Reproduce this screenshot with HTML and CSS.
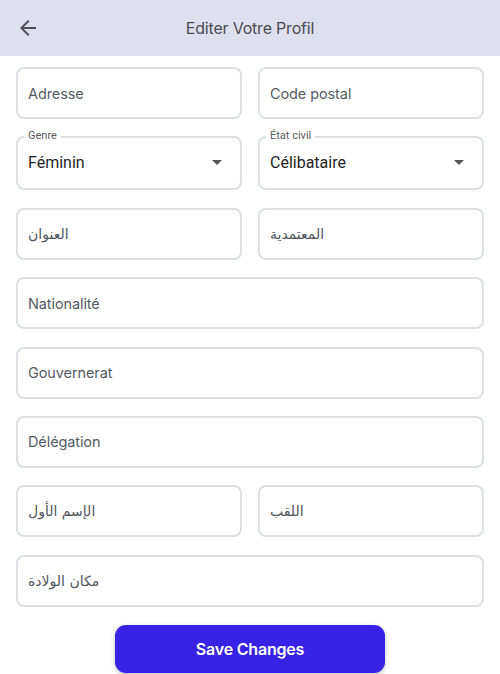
FILE: index.html
```html
<!DOCTYPE html>
<html lang="fr">
<head>
<meta charset="utf-8">
<title>Editer Votre Profil</title>
<link rel="stylesheet" href="styles.css">
</head>
<body>
<header class="topbar">
  <button class="back" aria-label="Retour">
    <svg width="24" height="24" viewBox="0 0 24 24"><path d="M20 11H7.83l5.59-5.59L12 4l-8 8 8 8 1.41-1.41L7.83 13H20v-2z" fill="#4f4f55"/></svg>
  </button>
  <h1 class="title">Editer Votre Profil</h1>
  <span></span>
</header>
<main class="form">
  <div class="row two">
    <div class="field"><span class="ph">Adresse</span></div>
    <div class="field"><span class="ph">Code postal</span></div>
  </div>
  <div class="row two">
    <div class="select"><span class="label">Genre</span><span class="value">Féminin</span><span class="caret"></span></div>
    <div class="select"><span class="label">État civil</span><span class="value">Célibataire</span><span class="caret"></span></div>
  </div>
  <div class="row two">
    <div class="field"><span class="ph ar">العنوان</span></div>
    <div class="field"><span class="ph ar">المعتمدية</span></div>
  </div>
  <div class="row"><div class="field"><span class="ph">Nationalité</span></div></div>
  <div class="row"><div class="field"><span class="ph">Gouvernerat</span></div></div>
  <div class="row"><div class="field"><span class="ph">Délégation</span></div></div>
  <div class="row two">
    <div class="field"><span class="ph ar">الإسم الأول</span></div>
    <div class="field"><span class="ph ar">اللقب</span></div>
  </div>
  <div class="row"><div class="field"><span class="ph ar">مكان الولادة</span></div></div>
  <div class="actions"><button class="save">Save Changes</button></div>
</main>
</body>
</html>
```
FILE: styles.css
```css
* { box-sizing: border-box; }
html, body { margin: 0; padding: 0; background: #ffffff; }
body { font-family: Inter, "Noto Sans", sans-serif; width: 500px; height: 674px; overflow: hidden; }

.topbar {
  height: 56px;
  background: #dfe0ee;
  display: grid;
  grid-template-columns: 56px 1fr 56px;
  align-items: center;
}
.back {
  border: 0; background: none; padding: 0 0 0 16px; margin: 0;
  display: flex; align-items: center; height: 56px; cursor: pointer;
}
.title {
  margin: 0; text-align: center;
  font-size: 16px; font-weight: 400; color: #4a4a50; letter-spacing: -0.2px;
}

.form {
  padding: 11px 16px 0;
  display: flex; flex-direction: column; gap: 17.4px;
}
.row { display: grid; grid-template-columns: 1fr; }
.row.two { grid-template-columns: 1fr 1fr; column-gap: 16px; }

.field {
  height: 52px;
  border: 2px solid #dcdfe3;
  border-radius: 8px;
  display: flex; align-items: center;
  padding: 0 10px;
}
.ph { font-size: 14.5px; color: #545b63; letter-spacing: -0.1px; }
.ph.ar { font-family: "DejaVu Sans", sans-serif; font-size: 14px; color: #4e545b; }

.select {
  position: relative;
  height: 54px;
  border: 2px solid #dcdfe3;
  border-radius: 8px;
  display: flex; align-items: center; justify-content: space-between;
  padding: 0 18px 2px 10px;
}
.label {
  position: absolute; top: -9px; left: 6px;
  background: #fff; padding: 0 4px;
  font-family: Roboto, sans-serif; font-size: 11px; color: #5a5a5a;
  line-height: 14px;
}
.value { font-family: Roboto, sans-serif; font-size: 16px; color: #1f1f1f; }
.caret {
  width: 0; height: 0;
  border-left: 5px solid transparent;
  border-right: 5px solid transparent;
  border-top: 5px solid #555;
}

.actions { display: flex; justify-content: center; padding-top: 0.6px; }
.save {
  width: 270px; height: 48px;
  border: 0; border-radius: 11px;
  background: #3822e6; color: #fff;
  font-family: Inter, sans-serif; font-size: 16px; font-weight: 600; letter-spacing: -0.2px;
  box-shadow: 0 2px 5px rgba(0,0,0,0.25);
}
```
